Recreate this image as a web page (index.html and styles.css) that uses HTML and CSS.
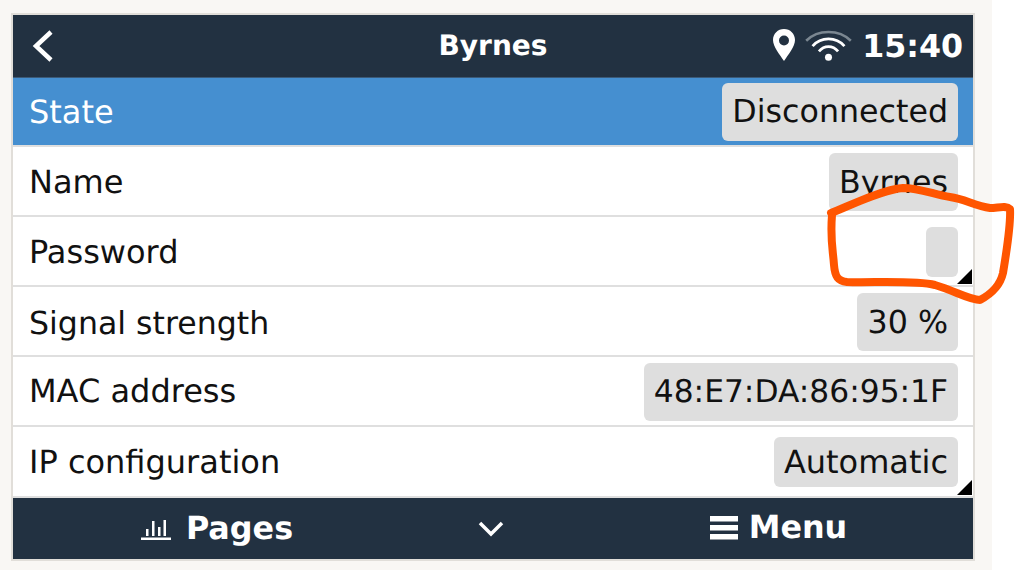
FILE: index.html
```html
<!DOCTYPE html>
<html lang="en">
<head>
<meta charset="utf-8">
<title>Byrnes</title>
<link rel="stylesheet" href="styles.css">
</head>
<body>
<div class="page">
  <div class="screen">
    <header class="topbar">
      <div class="top-left">
        <svg class="back" width="24" height="34" viewBox="0 0 24 34"><path d="M20 3 L5 17 L20 31" fill="none" stroke="#fff" stroke-width="4.5"/></svg>
      </div>
      <div class="title">Byrnes</div>
      <div class="status">
        <svg class="pin" width="24" height="34" viewBox="0 0 24 34"><path fill-rule="evenodd" d="M12 1C5.8 1 1 5.8 1 12c0 6.500 7 15 11 21 4-6 11-14.500 11-21C23 5.800 18.200 1 12 1zm0 6.500a5 5 0 1 1 0 10 5 5 0 0 1 0-10z" fill="#fff"/></svg>
        <svg class="wifi" width="49" height="34" viewBox="0 0 46 32"><path d="M2 12C13 1 33 1 44 12" fill="none" stroke="#7b8791" stroke-width="2.400"/><path d="M8 17C16 8 30 8 38 17" fill="none" stroke="#fff" stroke-width="2.600"/><path d="M14 22C19 16 27 16 32 22" fill="none" stroke="#fff" stroke-width="2.600"/><circle cx="23" cy="27.500" r="3.300" fill="#fff"/></svg>
        <span class="clock">15:40</span>
      </div>
    </header>
    <main class="list">
      <div class="row row-active"><span class="label">State</span><span class="value">Disconnected</span></div>
      <div class="row"><span class="label">Name</span><span class="value">Byrnes</span></div>
      <div class="row row-edit"><span class="label">Password</span><span class="value value-empty"></span></div>
      <div class="row"><span class="label label-tight">Signal strength</span><span class="value">30 %</span></div>
      <div class="row"><span class="label label-flat">MAC address</span><span class="value value-mac">48:E7:DA:86:95:1F</span></div>
      <div class="row row-edit row-last"><span class="label">IP configuration</span><span class="value value-wide">Automatic</span></div>
    </main>
    <footer class="bottombar">
      <div class="foot-item foot-pages">
        <svg width="32" height="24" viewBox="0 0 32 24"><path fill="#fff" d="M1 20.500h30v2.500H1zM6 12h2.500v7H6zM12 4h2.500v15H12zM18 10h2.500v9H18zM23.500 3H26v16h-2.500z"/></svg>
        <span>Pages</span>
      </div>
      <div class="foot-chevron">
        <svg width="26" height="16" viewBox="0 0 26 16"><path d="M2 2 L13 13 L24 2" fill="none" stroke="#fff" stroke-width="3.500"/></svg>
      </div>
      <div class="foot-item foot-menu">
        <svg width="30" height="24" viewBox="0 0 30 24"><path fill="#fff" d="M1 0h28v5.500H1zM1 9h28v5.500H1zM1 18h28v5.500H1z"/></svg>
        <span>Menu</span>
      </div>
    </footer>
  </div>
</div>
<svg class="scribble" width="1016" height="570" viewBox="0 0 1016 570"><path d="M831 213C845 208 880 190 903 188C920 188 935 195 950 197C965 199 975 206 990 208C998 208 1006 205 1010 209C1011 225 1006 255 1003 273C1001 282 995 292 980 300C970 300 955 291 935 285C915 280 870 283 847 282C838 281 835 277 834 265C833 250 830 240 832 215" fill="none" stroke="#ff5500" stroke-width="8" stroke-linecap="round" stroke-linejoin="round"/></svg>
</body>
</html>
```

FILE: styles.css
```css
* { box-sizing: border-box; }
html, body { margin: 0; padding: 0; background: #fff; }
body { width: 1016px; height: 570px; overflow: hidden; position: relative; font-family: "DejaVu Sans", sans-serif; text-rendering: geometricPrecision; }
.page { width: 992px; height: 570px; background: #f9f7f4; padding: 13px 0 0 11px; }
.screen { width: 964px; height: 548px; border: 2px solid #e1ded9; display: flex; flex-direction: column; background: #fff; }
.topbar { height: 63px; flex: none; background: #223141; color: #fff; display: grid; grid-template-columns: 1fr auto 1fr; align-items: center; border-bottom: 1px solid #3c5a78; }
.top-left { padding-left: 18px; display: flex; }
.title { font-size: 28px; font-weight: 700; padding-bottom: 2px; }
.status { display: flex; align-items: center; justify-content: flex-end; padding-right: 10px; padding-bottom: 2px; }
.clock { font-size: 31.7px; font-weight: 700; padding-top: 3px; }
.pin { margin-right: 8px; }
.wifi { margin-right: 9px; }
.list { flex: 1; display: flex; flex-direction: column; }
.row { height: 70px; flex: none; display: flex; align-items: center; justify-content: space-between; padding: 2px 15px 0 16px; font-size: 31.7px; color: #111; border-bottom: 2px solid #dfdfdf; position: relative; }
.row-active { background: #458fd0; color: #fff; height: 69px; padding: 1px 15px 1px 16px; }
.row-last { height: 71px; padding-top: 0; }
.label { font-size: 32px; }
.label-tight { font-size: 31.6px; padding-top: 3px; }
.label-flat { padding-bottom: 2px; }
.value { background: #dedede; color: #111; border-radius: 6px; padding: 1px 10px 0; height: 58px; display: flex; align-items: center; }
.value-mac { font-size: 31.3px; padding-top: 0; }
.value-wide { font-size: 32px; }
.value-empty { width: 32px; height: 50px; padding: 0; }
.row-edit .value { height: 50px; }
.row-edit::after { content: ""; position: absolute; right: 1px; bottom: 1px; border-style: solid; border-width: 0 0 15px 15px; border-color: transparent transparent #000 transparent; }
.bottombar { height: 61px; flex: none; background: #223141; color: #fff; display: grid; grid-template-columns: 407px 142px 1fr; align-items: center; font-size: 31.8px; font-weight: 700; }
.foot-item { display: flex; align-items: center; justify-content: center; padding-bottom: 2px; }
.foot-pages { gap: 14px; padding-top: 2px; }
.foot-menu { gap: 10px; padding-left: 21px; }
.foot-chevron { display: flex; justify-content: center; }
.scribble { position: absolute; left: 0; top: 0; }
```
